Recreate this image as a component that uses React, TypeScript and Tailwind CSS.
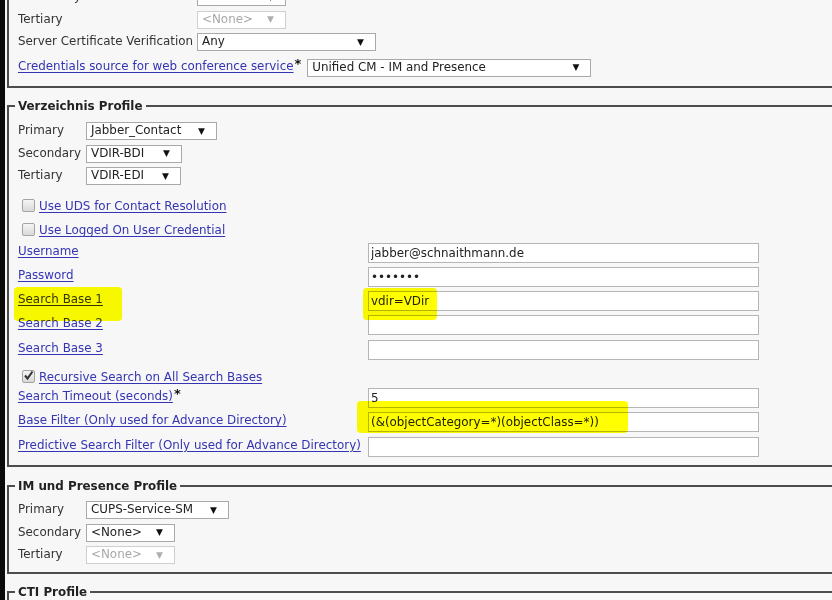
import React from "react";

const linkCls = "text-[#3434b4] underline underline-offset-[2px] decoration-[1px]";

const Arrow = ({ disabled }: { disabled?: boolean }) => (
  <span className={`text-[9px] leading-none ${disabled ? "text-[#b0b0b0]" : "text-[#111]"}`}>▼</span>
);

const Select = ({
  value,
  width,
  disabled,
}: {
  value: string;
  width: string;
  disabled?: boolean;
}) => (
  <div
    className={`${width} h-[18px] flex items-center justify-between bg-white border pl-[4px] pr-[11px] ${
      disabled ? "border-[#cfcfcf] text-[#a8a8a8]" : "border-[#a9a9a9] text-[#222]"
    }`}
  >
    <span className="leading-none whitespace-nowrap">{value}</span>
    <Arrow disabled={disabled} />
  </div>
);

const Field = ({ value = "", password }: { value?: string; password?: boolean }) => (
  <input
    readOnly
    type={password ? "password" : "text"}
    value={value}
    className="w-[391px] h-[20px] bg-white border border-[#b5b5b5] px-[2px] text-[#222] outline-none"
  />
);

const Checkbox = ({ checked }: { checked?: boolean }) => (
  <div className="relative w-[13px] h-[13px] rounded-[2px] border border-[#a3a3a3] bg-gradient-to-b from-[#f6f6f6] to-[#d9d9d9]">
    {checked && (
      <svg viewBox="0 0 13 13" className="absolute -left-[1px] -top-[2px] w-[13px] h-[13px]">
        <path d="M3 6.5 L5.5 9.5 L10.5 2.5" fill="none" stroke="#333" strokeWidth="2" />
      </svg>
    )}
  </div>
);

const ProfileRow = ({ label, children }: { label: string; children: React.ReactNode }) => (
  <div className="h-[22.5px] flex items-center">
    <span className="w-[68px] text-[#333]">{label}</span>
    {children}
  </div>
);

const InputRow = ({
  label,
  star,
  children,
}: {
  label: string;
  star?: boolean;
  children: React.ReactNode;
}) => (
  <div className="h-[20px] flex items-center">
    <span className="w-[350px] leading-[14px] -mt-[4px] whitespace-nowrap">
      <span className={linkCls}>{label}</span>
      {star && <sup className="text-[#111] text-[13px] font-bold top-[-2px] ml-[1px]">*</sup>}
    </span>
    {children}
  </div>
);

export default function App() {
  return (
    <div className="relative w-[832px] h-[600px] overflow-hidden bg-[#f7f7f7] flex font-['DejaVu_Sans',Verdana,sans-serif] text-[11.9px]">
      <div className="w-[5px] shrink-0 bg-[#0b0b0b]" />
      <div className="pl-[2px] flex flex-col">
        {/* top profile, cut off */}
        <fieldset className="w-[900px] -mt-[14px] border-x-2 border-b-2 border-[#4d4d4d] pl-[9px] pb-[4px]">
          <div className="h-[22.5px] flex items-center">
            <span className="w-[179px] text-[#333]">Secondary</span>
            <Select value="<None>" width="w-[89px]" />
          </div>
          <div className="h-[22.5px] flex items-center">
            <span className="w-[179px] text-[#333]">Tertiary</span>
            <Select value="<None>" width="w-[89px]" disabled />
          </div>
          <div className="h-[22.5px] flex items-center">
            <span className="w-[179px] text-[#333]">Server Certificate Verification</span>
            <Select value="Any" width="w-[179px]" />
          </div>
          <div className="h-[28px] flex items-center">
            <span className="whitespace-nowrap pb-[2px]">
              <span className={linkCls}>Credentials source for web conference service</span>
              <sup className="text-[#111] text-[13px] font-bold top-[-2px] ml-[1px]">*</sup>
            </span>
            <div className="ml-[6px]">
              <Select value="Unified CM - IM and Presence" width="w-[284px]" />
            </div>
          </div>
        </fieldset>

        {/* Verzeichnis */}
        <fieldset className="w-[900px] mt-[10px] border-2 border-[#4d4d4d] pl-[6px] pb-[8px]">
          <legend className="px-[3px] font-bold text-[#222] leading-[16px]">Verzeichnis Profile</legend>
          <div className="pl-[3px] pt-[6.5px] flex flex-col">
            <ProfileRow label="Primary">
              <Select value="Jabber_Contact" width="w-[131px]" />
            </ProfileRow>
            <ProfileRow label="Secondary">
              <Select value="VDIR-BDI" width="w-[96px]" />
            </ProfileRow>
            <ProfileRow label="Tertiary">
              <Select value="VDIR-EDI" width="w-[95px]" />
            </ProfileRow>

            <div className="mt-[6px] h-[24px] flex items-center gap-[4px] pl-[4px]">
              <Checkbox />
              <span className={`${linkCls} pt-[3px]`}>Use UDS for Contact Resolution</span>
            </div>
            <div className="h-[24px] flex items-center gap-[4px] pl-[4px]">
              <Checkbox />
              <span className={`${linkCls} pt-[3px]`}>Use Logged On User Credential</span>
            </div>

            <div className="flex flex-col gap-[4.25px] mt-[1px]">
              <InputRow label="Username">
                <Field value="jabber@schnaithmann.de" />
              </InputRow>
              <InputRow label="Password">
                <Field value="1234567" password />
              </InputRow>
              <InputRow label="Search Base 1">
                <Field value="vdir=VDir" />
              </InputRow>
              <InputRow label="Search Base 2">
                <Field />
              </InputRow>
              <InputRow label="Search Base 3">
                <Field />
              </InputRow>
            </div>

            <div className="mt-[5.5px] h-[22px] flex items-center gap-[4px] pl-[4px]">
              <Checkbox checked />
              <span className={`${linkCls} pt-[4px]`}>Recursive Search on All Search Bases</span>
            </div>

            <div className="flex flex-col gap-[4.5px] mt-[0.5px]">
              <InputRow label="Search Timeout (seconds)" star>
                <Field value="5" />
              </InputRow>
              <InputRow label="Base Filter (Only used for Advance Directory)">
                <Field value="(&(objectCategory=*)(objectClass=*))" />
              </InputRow>
              <InputRow label="Predictive Search Filter (Only used for Advance Directory)">
                <Field />
              </InputRow>
            </div>
          </div>
        </fieldset>

        {/* IM und Presence */}
        <fieldset className="w-[900px] mt-[11px] border-2 border-[#4d4d4d] pl-[6px] pb-[5px]">
          <legend className="px-[3px] font-bold text-[#222] leading-[16px]">IM und Presence Profile</legend>
          <div className="pl-[3px] pt-[5.5px] flex flex-col">
            <ProfileRow label="Primary">
              <Select value="CUPS-Service-SM" width="w-[143px]" />
            </ProfileRow>
            <ProfileRow label="Secondary">
              <Select value="<None>" width="w-[89px]" />
            </ProfileRow>
            <ProfileRow label="Tertiary">
              <Select value="<None>" width="w-[89px]" disabled />
            </ProfileRow>
          </div>
        </fieldset>

        {/* CTI */}
        <fieldset className="w-[900px] h-[60px] mt-[10px] border-2 border-[#4d4d4d] pl-[6px]">
          <legend className="px-[3px] font-bold text-[#222] leading-[16px]">CTI Profile</legend>
        </fieldset>
      </div>

      {/* marker highlights */}
      <div className="absolute left-[14px] top-[287px] w-[108px] h-[34px] bg-[#ffff00] mix-blend-multiply rounded-[4px]" />
      <div className="absolute left-[363px] top-[288px] w-[74px] h-[32px] bg-[#ffff00] mix-blend-multiply rounded-[4px]" />
      <div className="absolute left-[357px] top-[401px] w-[271px] h-[32px] bg-[#ffff00] mix-blend-multiply rounded-[4px]" />
    </div>
  );
}
